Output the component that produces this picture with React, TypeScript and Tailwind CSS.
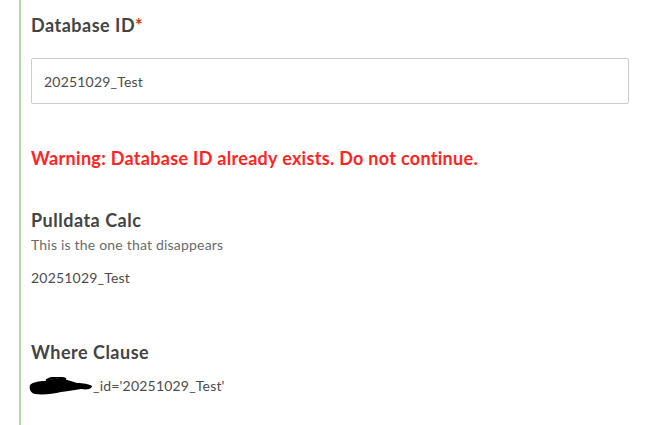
import React from "react";

export default function App() {
  return (
    <div className="w-[647px] h-[425px] bg-white overflow-hidden" style={{ fontFamily: "Lato, 'Noto Sans', sans-serif" }}>
      <div className="ml-[19px] h-full border-l-2 border-[#b9d5ae] pl-[10px] pr-[18px] flex flex-col">
        <div className="pt-[13px] text-[18px] leading-[24px] font-bold tracking-[0.5px] text-[#444444]">
          Database ID<span className="text-[#c53a1a]">*</span>
        </div>
        <div className="mt-[21px] h-[46px] border border-[#cccccc] rounded-[2px] flex items-center px-[12px] text-[14px] tracking-[0.2px] text-[#4c4c4c]">
          20251029_Test
        </div>
        <div className="mt-[42px] text-[18px] leading-[24px] font-bold tracking-[0.3px] text-[#ff2424]">
          Warning: Database ID already exists. Do not continue.
        </div>
        <div className="mt-[38px] text-[18px] leading-[24px] font-bold tracking-[0.5px] text-[#444444]">Pulldata Calc</div>
        <div className="mt-[4px] text-[14px] leading-[18px] tracking-[0.2px] text-[#6b6b6b]">This is the one that disappears</div>
        <div className="mt-[15px] text-[14px] leading-[18px] tracking-[0.2px] text-[#4c4c4c]">20251029_Test</div>
        <div className="mt-[53px] text-[18px] leading-[24px] font-bold tracking-[0.5px] text-[#444444]">Where Clause</div>
        <div className="mt-[13px] text-[14px] leading-[18px] tracking-[0.2px] text-[#4c4c4c] flex items-center -ml-[2px]">
          <svg width="64" height="18" viewBox="0 0 64 18" className="shrink-0">
            <path
              d="M1 8 C4 5, 10 4, 16 4 C22 2, 28 1, 34 2 C40 3, 44 5, 48 6 C54 6, 60 7, 63 9 C63 12, 58 13, 52 12 C46 13, 40 14, 32 15 C24 17, 14 18, 6 17 C1 16, 0 11, 1 8 Z"
              fill="#000"
            />
            <path d="M18 3 C24 0, 30 0, 36 2" stroke="#000" strokeWidth="2.5" fill="none" strokeLinecap="round" />
          </svg>
          <span>_id='20251029_Test'</span>
        </div>
      </div>
    </div>
  );
}
